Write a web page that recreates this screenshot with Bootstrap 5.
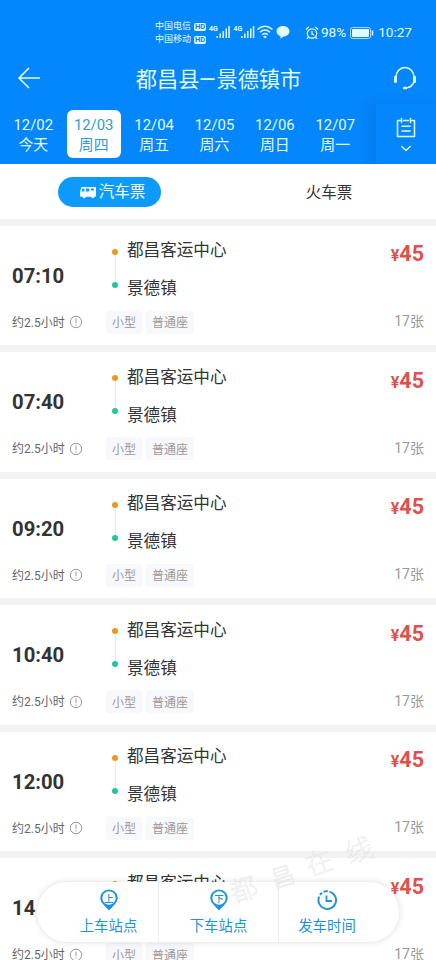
<!DOCTYPE html>
<html lang="zh-CN">
<head>
    <meta charset="UTF-8" />
    <meta name="viewport" content="width=device-width, initial-scale=1.0"/>
    <title>都昌县–景德镇市</title>
    <link href="https://cdn.jsdelivr.net/npm/bootstrap@5.3.0/dist/css/bootstrap.min.css" rel="stylesheet"/>
    <style>
        body { font-family: Roboto, "Noto Sans CJK SC", sans-serif; background: #f2f2f2; color: #333; line-height: 1; }
        .screen { width: 436px; height: 960px; }
        .top-area { background: #0486fd; color: #e2fbff; }
        svg { display: block; flex-shrink: 0; }

        .status-bar { height: 52px; padding: 12px 24px 0 155px; }
        .carriers { font-size: 9px; line-height: 13px; width: 52px; }
        .hd { font-size: 7.5px; line-height: 8px; font-weight: 700; background: #dff8ff; color: #0486fd; border-radius: 2px; padding: 0 1px; margin-left: 3px; }
        .status-text { font-size: 13.6px; margin-top: 5px; }
        .percent { font-size: 13.6px; margin-left: 1px; }

        .title-bar { height: 52px; padding: 0 19px 0 18px; }
        .page-title { font-size: 21.2px; padding-top: 4px; }
        .title-dash { display: inline-block; transform: scaleX(1.35); padding: 0 1.6px; }

        .date-strip { height: 60px; padding-left: 2.3px; }
        .day { width: 54px; height: 48px; margin-right: 6.4px; padding-top: 2px; font-size: 14.9px; border-radius: 6px; }
        .day span + span { margin-top: 5px; }
        .day.active { background: #fff; color: #3199d6; }
        .calendar-btn { width: 60px; background: #0486fd; box-shadow: -5px 0 10px rgba(0, 70, 150, .18); }

        .ticket-tabs { height: 55px; padding-top: 1px; }
        .tab-pill { width: 103px; height: 30px; font-size: 15.5px; background: #0c9bfd; color: #fff; padding-left: 7px; }
        .pill-icon { margin-right: 3px; }
        .pill-text { padding-top: 2px; }
        .tab-plain { font-size: 15.5px; padding-left: 4px; padding-top: 4px; }

        .trip { height: 119.6px; margin-top: 6.9px; padding: 0 12px; flex-shrink: 0; }
        .trip-main { height: 85px; }
        .col-time { width: 94px; }
        .depart { font-size: 20.3px; font-weight: 700; padding-top: 15px; }
        .track { width: 19px; padding: 23px 0 0 6px; }
        .dot { width: 6px; height: 6px; border-radius: 50%; }
        .dot-from { background: #f0961e; }
        .dot-to { background: #1fc79b; }
        .track-line { width: 1px; height: 27px; margin-left: 2.5px; background: #e8e8e8; }
        .station { font-size: 16.6px; line-height: 20px; margin-left: 2px; }
        .stations { padding-top: 15.5px; }
        .station + .station { margin-top: 18px; }
        .price { font-size: 21.5px; font-weight: 700; color: #dd524d; padding-top: 17.5px; }
        .price span { font-size: 16px; }
        .duration { font-size: 12px; color: #666; padding-top: 1px; }
        .info-icon { margin-left: 4px; }
        .seat-tag { height: 23px; font-size: 12px; color: #999; background: #f7f8fc; border-radius: 3px; padding: 2px 6px 0; margin-right: 4px; }
        .remain { font-size: 14px; color: #999; margin-top: -2px; }

        .filter-bar { width: 362px; height: 60px; left: 37px; top: 881.5px; background: #fff; border-radius: 30px; box-shadow: 0 0 7px rgba(0, 0, 0, .14); color: #1c93dc; font-size: 14.4px; }
        .filter-side { width: 121px; }
        .filter-item { padding-top: 1px; }
        .filter-item + .filter-item { border-left: 1px solid #ececec; }
        .filter-item:first-child { padding-left: 22px; }
        .filter-item:last-child { padding-right: 24px; }
        .filter-item svg { margin-bottom: 9px; }

        .site-mark { left: 225px; top: 830px; pointer-events: none; }
    </style>
</head>
<body>
<div class="screen position-relative overflow-hidden d-flex flex-column">
    <header class="top-area flex-shrink-0">
        <div class="status-bar d-flex">
            <div class="carriers mt-2">
                <div class="d-flex align-items-center">中国电信<span class="hd">HD</span></div>
                <div class="d-flex align-items-center">中国移动<span class="hd">HD</span></div>
            </div>
            <svg class="mt-2" width="87" height="26" viewBox="0 0 87 26" fill="currentColor">
                <g id="signal">
                    <text x="2" y="11" font-size="7" font-weight="700">4G</text>
                    <path d="M9.500 16H11v2H9.500zM12.500 13.500H14V18h-1.500zM15.500 11H17v7h-1.500zM18.500 8.500H20V18h-1.500zM21.300 6h1.500v12h-1.500z"/>
                </g>
                <use href="#signal" x="24.500"/>
                <g fill="none" stroke="currentColor" stroke-width="1.500">
                    <path d="M50.500 9.500q7.500-6.500 15 0M53 12.200q5-4.500 10 0M55.300 14.800q2.700-2.500 5.400 0"/>
                </g>
                <path d="M56.200 16.400q1.800-1.400 3.600 0L58 18.500z"/>
                <path d="M76 6c3.800 0 6.500 2.400 6.500 5.300s-2.600 5.200-6.200 5.300c-.8 1-2 1.800-3.300 1.900.5-.7.700-1.500.5-2.300-2.400-.8-4-2.600-4-4.900C69.500 8.400 72.200 6 76 6z"/>
            </svg>
            <div class="status-text d-flex align-items-center ms-auto align-self-start pt-2">
                <svg width="15" height="16" viewBox="0 0 15 16" fill="none" stroke="currentColor" stroke-width="1.300">
                    <circle cx="7" cy="8.500" r="4.700"/>
                    <path d="M7 6v3l2 1M1 4.500l2.800-2.500M13 4.500l-2.800-2.500M3.500 12l-1.500 1.800M10.500 12l1.500 1.800"/>
                </svg>
                <span class="percent">98%</span>
                <svg class="ms-1 me-1" width="24" height="12" viewBox="0 0 24 12">
                    <rect x=".5" y=".5" width="20" height="11" rx="2" fill="none" stroke="currentColor" opacity=".7"/>
                    <rect x="2" y="2" width="17" height="8" rx="1" fill="currentColor"/>
                    <path d="M22.500 3.500v5" stroke="currentColor" stroke-width="1.500"/>
                </svg>
                <span>10:27</span>
            </div>
        </div>

        <div class="title-bar d-flex align-items-center justify-content-between">
            <svg width="22" height="22" viewBox="0 0 22 22" fill="none" stroke="currentColor" stroke-width="1.700" stroke-linecap="round" stroke-linejoin="round">
                <path d="M10.500 1.500L1 11l9.500 9.500M1 11h20.500"/>
            </svg>
            <div class="page-title ps-1">都昌县<span class="title-dash">–</span>景德镇市</div>
            <svg width="24" height="24" viewBox="0 0 24 24" fill="none" stroke="currentColor" stroke-width="1.500" stroke-linecap="round">
                <path d="M3 11.500C3 5.500 7 1.500 12 1.500s9 4 9 10M21 15.500c-1 3.500-3 5.300-6 6"/>
                <path d="M2.500 11v4.500M21.500 11v4.500" stroke-width="3"/>
                <path d="M11.200 22h2" stroke-width="2.600"/>
            </svg>
        </div>

        <div class="date-strip d-flex">
            <div class="d-flex align-items-center flex-grow-1 ps-1 overflow-hidden" id="days"></div>
            <div class="calendar-btn d-flex flex-column align-items-center pt-2 flex-shrink-0">
                <svg class="mt-1" width="22" height="37" viewBox="0 0 22 37" fill="none" stroke="currentColor" stroke-width="1.500" stroke-linecap="round" stroke-linejoin="round">
                    <path d="M5 4.500H2.500v16h17v-16H17M8.500 4.500h5M6.500 2.500v4M15.500 2.500v4M7 10.300h8M7 15h8"/>
                    <path d="M6.800 30.500l4.200 4 4.200-4" stroke-width="1.300"/>
                </svg>
            </div>
        </div>
    </header>

    <div class="ticket-tabs bg-white d-flex align-items-center flex-shrink-0">
        <div class="w-50 d-flex justify-content-center">
            <div class="tab-pill rounded-pill d-flex align-items-center justify-content-center">
                <svg class="pill-icon" width="16" height="13" viewBox="0 0 16 13" fill="#fff">
                    <path d="M2.500 1H15q1 0 1 1v8q0 .8-1 .8h-.5a1.800 1.800 0 0 1-3.400 0H6a1.800 1.800 0 0 1-3.500 0h-1Q0 10.800 0 9.500V7l1-5q.3-1 1.500-1z"/>
                    <path d="M2.500 2.500h2v3h-3zM6 2.500h3.300v3H6zM10.800 2.500H14v2h-3.200z" fill="#0c9bfd"/>
                </svg>
                <span class="pill-text">汽车票</span>
            </div>
        </div>
        <div class="tab-plain w-50 text-center">火车票</div>
    </div>

    <main id="trips" class="d-flex flex-column"></main>

    <nav class="filter-bar position-absolute d-flex">
        <div class="filter-item filter-side d-flex flex-column align-items-center justify-content-center">
            <svg width="18" height="22" viewBox="0 0 18 22">
                <path d="M9 21.500L4 16.200a8.700 8.700 0 1 1 10 0z" fill="#1c93dc"/>
                <circle cx="9" cy="9" r="6.700" fill="#fff"/>
                <text x="9" y="12.500" font-size="9.500" font-weight="500" text-anchor="middle" fill="#1c93dc">上</text>
            </svg>
            <span>上车站点</span>
        </div>
        <div class="filter-item d-flex flex-column align-items-center justify-content-center flex-grow-1">
            <svg width="18" height="22" viewBox="0 0 18 22">
                <path d="M9 21.500L4 16.200a8.700 8.700 0 1 1 10 0z" fill="#1c93dc"/>
                <circle cx="9" cy="9" r="6.700" fill="#fff"/>
                <text x="9" y="12.500" font-size="9.500" font-weight="500" text-anchor="middle" fill="#1c93dc">下</text>
            </svg>
            <span>下车站点</span>
        </div>
        <div class="filter-item filter-side d-flex flex-column align-items-center justify-content-center">
            <svg width="20" height="22" viewBox="0 0 20 22" fill="none" stroke="#1c93dc" stroke-width="1.900">
                <path d="M12.500 2.700a8.800 8.800 0 1 1-10.300 5M3 6a8.800 8.800 0 0 1 2-2.200M6.500 2.900a8.800 8.800 0 0 1 4.300-.7"/>
                <path d="M9.500 6.500V12H15" stroke-width="1.800"/>
            </svg>
            <span>发车时间</span>
        </div>
    </nav>

    <svg class="site-mark position-absolute" width="211" height="90" viewBox="0 0 211 90" fill="#fff" fill-opacity=".7" stroke="#888" stroke-opacity=".22" stroke-width=".6" font-size="27" font-family="'Noto Sans CJK SC', sans-serif" font-weight="300">
        <text transform="translate(9 73) rotate(-18)">都</text>
        <text transform="translate(49 59) rotate(-18)" font-size="24">昌</text>
        <text transform="translate(84 46) rotate(-18)">在</text>
        <text transform="translate(124 34) rotate(-18)">线</text>
    </svg>
</div>

<script>
    const dias = [
        ["12/02", "今天"], ["12/03", "周四"], ["12/04", "周五"],
        ["12/05", "周六"], ["12/06", "周日"], ["12/07", "周一"],
    ];
    // la última salida queda tapada por la barra de filtros
    const horas = ["07:10", "07:40", "09:20", "10:40", "12:00", "14"];

    document.getElementById("days").innerHTML = dias.map(([fecha, dia], i) => `
        <div class="day ${i === 1 ? "active" : ""} d-flex flex-column align-items-center justify-content-center flex-shrink-0">
            <span>${fecha}</span><span>${dia}</span>
        </div>`).join("");

    document.getElementById("trips").innerHTML = horas.map(hora => `
        <div class="trip bg-white">
            <div class="trip-main d-flex">
                <div class="col-time d-flex align-items-center"><span class="depart">${hora}</span></div>
                <div class="track">
                    <div class="dot dot-from"></div>
                    <div class="track-line"></div>
                    <div class="dot dot-to"></div>
                </div>
                <div class="stations flex-grow-1">
                    <div class="station">都昌客运中心</div>
                    <div class="station">景德镇</div>
                </div>
                <div class="price"><span>¥</span>45</div>
            </div>
            <div class="d-flex align-items-center">
                <div class="col-time d-flex align-items-center">
                    <span class="duration">约2.5小时</span>
                    <svg class="info-icon" width="14" height="14" viewBox="0 0 14 14" fill="none" stroke="#999">
                        <circle cx="7" cy="7" r="5.700"/>
                        <path d="M7 3.500v4.700M7 9.300v1.400"/>
                    </svg>
                </div>
                <span class="seat-tag d-flex align-items-center">小型</span>
                <span class="seat-tag d-flex align-items-center">普通座</span>
                <span class="remain ms-auto">17张</span>
            </div>
        </div>`).join("");
</script>
<script src="https://cdn.jsdelivr.net/npm/bootstrap@5.3.0/dist/js/bootstrap.bundle.min.js"></script>
</body>
</html>
